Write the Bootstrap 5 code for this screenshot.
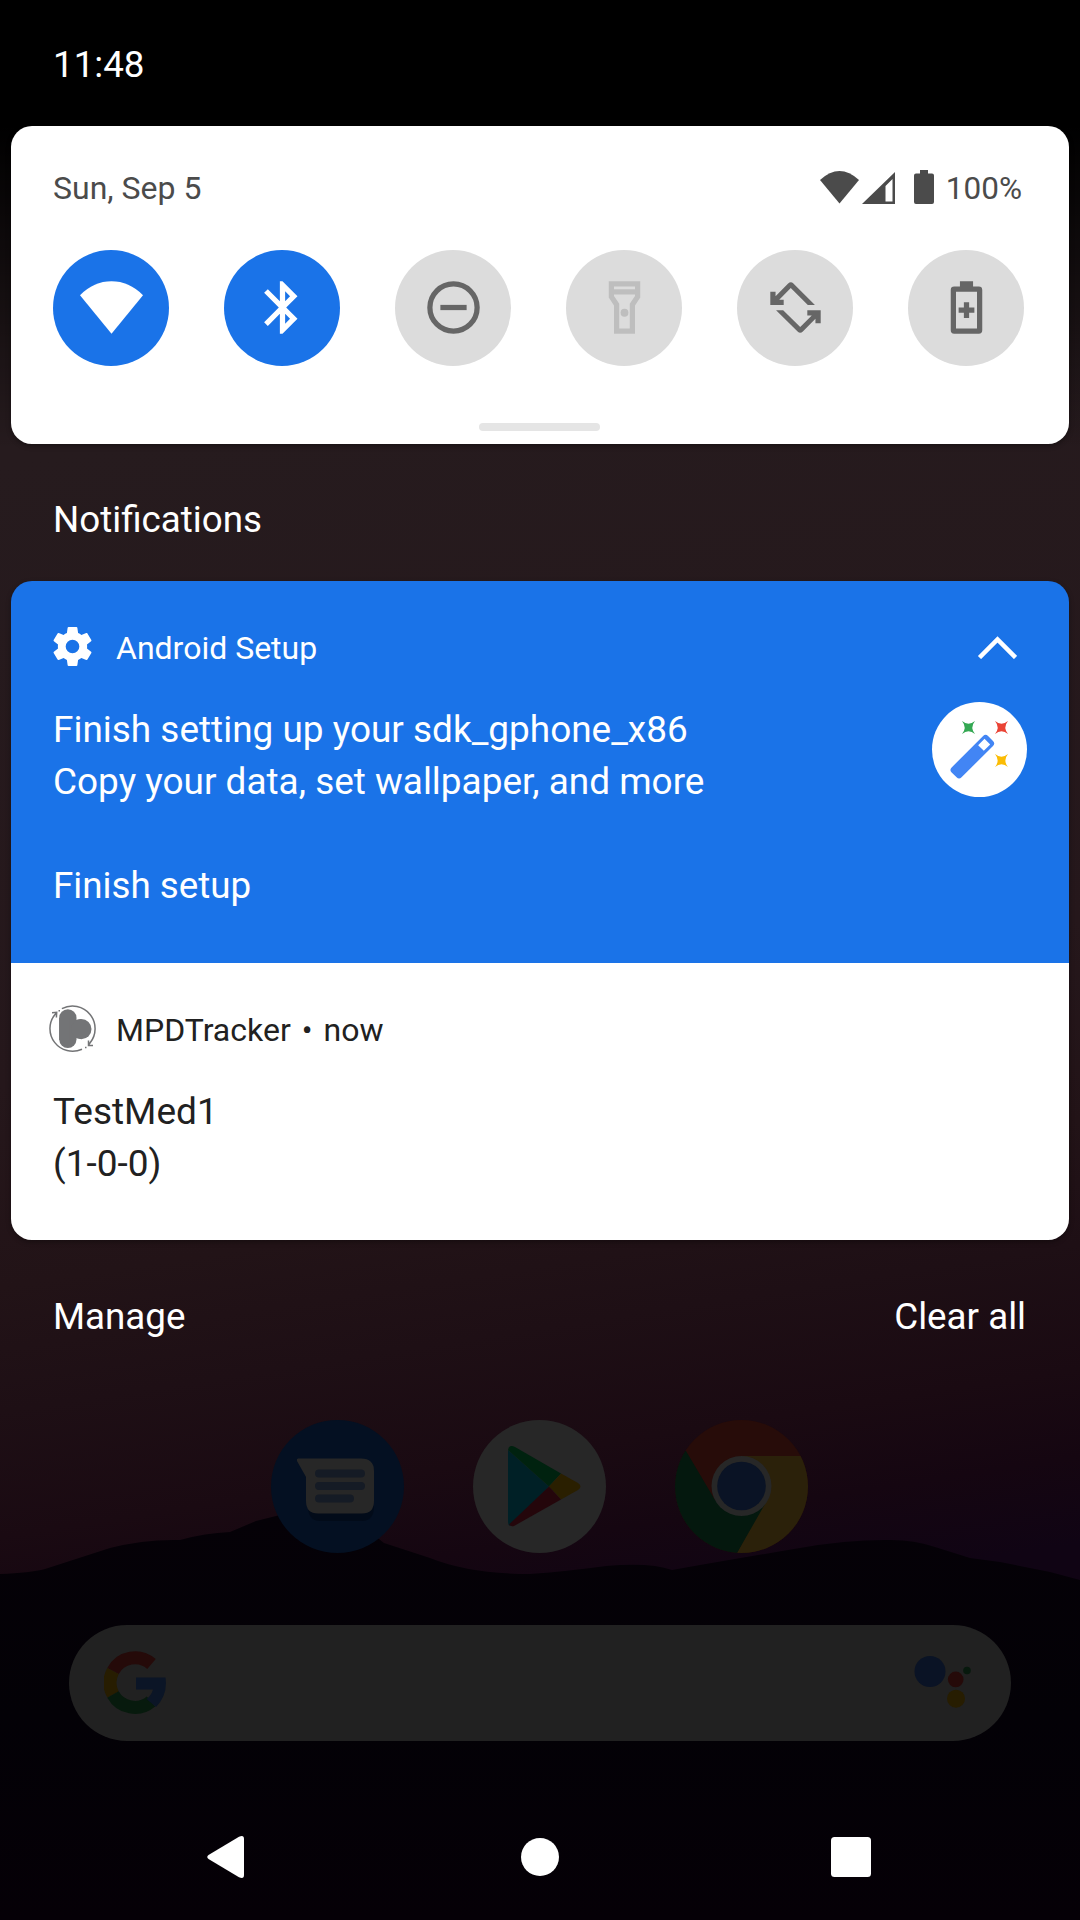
<!DOCTYPE html>
<html lang="en">
<head>
<meta charset="utf-8">
<meta name="viewport" content="width=device-width, initial-scale=1">
<title>Notification shade</title>
<link href="https://cdn.jsdelivr.net/npm/bootstrap@5.3.0/dist/css/bootstrap.min.css" rel="stylesheet">
<style>
body{background:#000;font-family:Roboto,"Noto Sans",sans-serif;font-size:36.750px;line-height:52px;color:#fff}
svg{display:block;flex:none}
.phone{width:1080px;height:1920px}
.wall{z-index:0}
.shade{z-index:1;height:1920px}
.clock-bar{height:126px;padding:39px 53px 0}
.panel{margin:0 11px;border-radius:21px;overflow:hidden;box-shadow:0 2px 5px rgba(0,0,0,.35)}
.quick{height:318px;background:#fff;color:#4b4b4b}
.quick-top{height:124px;padding:0 47px 0 42px;font-size:32px}
.charge{margin-left:11px;padding-top:1px;font-size:31.5px}
.tiles{padding:0 45px 0 42px}
.tile{width:116px;height:116px;border-radius:50%;background:#dcdcdc;color:#666;padding:0 0 1px}
.tile.active{background:#1a73e8;color:#fff}
.tile.off{color:#bebebe}
.handle{width:121px;height:8px;border-radius:4px;background:#e5e5e5;margin:57px 0 0 468px}
.section-title{height:137px;padding:50px 53px 0}
.note{padding-left:42px;padding-right:42px;font-size:37px}
.note-blue{height:382px;background:#1a73e8;padding-top:44px}
.note-white{height:277px;background:#fff;color:#212121;padding-top:42px}
.note-head{font-size:32px;line-height:40px}
.note-main{padding-top:33px}
.note-blue .note-main{padding-top:34px;font-size:36.950px}
.note-text{padding-top:2px}
.app-name{padding-top:2px}
.dot-sep{margin:0 11px;padding-top:2px}
.note-action{padding-top:52px;font-size:36.750px}
.footer-row{height:180px;padding:51px 54px 0 53px}
.dock{gap:69px;height:133px;padding-right:2px}
.search{width:942px;height:116px;border-radius:58px;background:#212121;margin:72px 0 0 69px;padding:0 40px 0 35px}
.navbar-soft{margin-top:95px;height:42px;padding:0 209px 0 207px}
.home-dot{margin-left:5px}
</style>
<script src="https://cdn.jsdelivr.net/npm/bootstrap@5.3.0/dist/js/bootstrap.bundle.min.js"></script>
</head>
<body>
<div class="phone position-relative overflow-hidden">
<svg class="wall position-absolute top-0 start-0" width="1080" height="1920" viewBox="0 0 1080 1920">
<defs>
<linearGradient id="night" x1="0" y1="0" x2="0" y2="1"><stop offset="0" stop-color="#000"/><stop offset=".28" stop-color="#000"/><stop offset="1" stop-color="#000" stop-opacity="0"/></linearGradient>
<linearGradient id="sky" gradientUnits="userSpaceOnUse" x1="400" y1="400" x2="590" y2="1620">
<stop offset="0" stop-color="#261b1e"/><stop offset=".5" stop-color="#25171b"/><stop offset=".66" stop-color="#221317"/><stop offset=".76" stop-color="#1e0f15"/><stop offset=".86" stop-color="#1a0a12"/><stop offset=".93" stop-color="#150611"/><stop offset="1" stop-color="#100414"/>
</linearGradient>
<linearGradient id="hill" x1="0" y1="0" x2="0" y2="1"><stop offset="0" stop-color="#050107"/><stop offset=".5" stop-color="#030106"/><stop offset="1" stop-color="#050006"/></linearGradient>
</defs>
<rect width="1080" height="1920" fill="url(#sky)"/>
<rect width="1080" height="450" fill="url(#night)"/>
<path fill="url(#hill)" d="M0 1574Q30 1573 45 1569L110 1548Q145 1539 180 1540Q205 1533 230 1532L256 1521 280 1515Q340 1505 384 1543L430 1558Q470 1574 530 1574Q570 1571 606 1566Q650 1562 672 1570Q740 1558 800 1548Q845 1540 885 1540Q912 1539 935 1547L970 1558 1000 1562 1050 1572 1080 1580V1920H0z"/>
</svg>

<main class="shade position-relative d-flex flex-column">
<header class="clock-bar">11:48</header>

<section class="panel quick">
<div class="quick-top d-flex justify-content-between align-items-center">
<span>Sun, Sep 5</span>
<div class="d-flex align-items-center">
<svg width="115" height="36" viewBox="0 1 115 36" fill="#4b4b4b"><path d="M0 11Q19.500-7 39 11L19.500 34.500z"/><path fill-rule="evenodd" d="M75 3V35H42zM72.500 10L65.500 17V32.500H72.500z"/><path d="M100 1h8v3.500h4q2 0 2 2V33q0 2-2 2H96q-2 0-2-2V6.500q0-2 2-2h4z"/></svg>
<span class="charge">100%</span>
</div>
</div>
<div class="tiles d-flex justify-content-between">
<div class="tile active d-flex align-items-center justify-content-center"><svg width="63" height="63" viewBox="0 0 24 24" fill="currentColor"><path d="M0 7.300Q5.300 2 12 2T24 7.300L12 22z"/></svg></div>
<div class="tile active d-flex align-items-center justify-content-center"><svg width="63" height="63" viewBox="0 0 24 24" fill="currentColor"><path d="M17.710 7.710L12 2h-1v7.590L6.410 5 5 6.410 10.590 12 5 17.590 6.410 19 11 14.410V22h1l5.710-5.710-4.300-4.290 4.300-4.290zM13 5.830l1.880 1.880L13 9.590V5.830zm1.880 10.460L13 18.170v-3.760l1.880 1.880z"/></svg></div>
<div class="tile d-flex align-items-center justify-content-center"><svg width="63" height="63" viewBox="0 0 24 24" fill="none" stroke="currentColor" stroke-width="2"><circle cx="12" cy="12" r="9"/><path d="M7 12h10"/></svg></div>
<div class="tile off d-flex align-items-center justify-content-center"><svg width="63" height="63" viewBox="0 0 24 24" fill="currentColor"><path fill-rule="evenodd" d="M6 2v6.200l2 3V22h8V11.200l2-3V2zM16 4v1H8V4zM14 10.600V20h-4v-9.400l-2-3V7h8v.600z"/><circle cx="12" cy="14" r="1.500"/></svg></div>
<div class="tile d-flex align-items-center justify-content-center"><svg width="63" height="63" viewBox="0 0 24 24" fill="currentColor"><g id="turn"><path d="M19.400 11h-2.700L10.200 4.600 5.800 9H7.500v2H2.400V6h2v1.700L9.200 2.900q1-1 2 0z"/></g><use href="#turn" transform="rotate(180 12 12)"/></svg></div>
<div class="tile d-flex align-items-center justify-content-center"><svg width="63" height="63" viewBox="0 0 24 24" fill="currentColor"><path fill-rule="evenodd" d="M9.500 2h5v2h2.200Q18 4 18 5.300V20.700Q18 22 16.700 22H7.300Q6 22 6 20.700V5.300Q6 4 7.300 4h2.200zM8 6v14h8V6z"/><path d="M11 10h2v2h2v2h-2v2h-2v-2H9v-2h2z"/></svg></div>
</div>
<div class="handle"></div>
</section>

<div class="section-title">Notifications</div>

<section class="panel">
<article class="note note-blue">
<div class="note-head d-flex align-items-center">
<svg width="39" height="41" viewBox="2 1.500 20 21" fill="#fff"><path d="M19.430 12.980c.04-.32.07-.64.07-.98s-.03-.66-.07-.98l2.110-1.650c.19-.15.24-.42.12-.64l-2-3.460c-.12-.22-.39-.3-.61-.22l-2.490 1c-.52-.4-1.080-.73-1.690-.98l-.38-2.650C14.460 2.180 14.250 2 14 2h-4c-.25 0-.46.18-.49.42l-.38 2.650c-.61.25-1.170.59-1.690.98l-2.490-1c-.23-.09-.49 0-.61.22l-2 3.460c-.13.22-.07.49.12.64l2.110 1.650c-.04.32-.07.65-.07.98s.03.66.07.98l-2.110 1.650c-.19.15-.24.42-.12.64l2 3.460c.12.22.39.3.61.22l2.490-1c.52.4 1.080.73 1.690.98l.38 2.650c.03.24.24.42.49.42h4c.25 0 .46-.18.49-.42l.38-2.650c.61-.25 1.170-.59 1.690-.98l2.490 1c.23.09.49 0 .61-.22l2-3.460c.12-.22.07-.49-.12-.64l-2.110-1.650zM12 15.500a3.500 3.500 0 1 1 0-7 3.500 3.500 0 0 1 0 7z"/></svg>
<span style="margin-left:24px;padding-top:3px">Android Setup</span>
<svg class="ms-auto" style="margin-right:10px" width="40" height="24" viewBox="0 -1 40 24" fill="none" stroke="#fff" stroke-width="4.500"><path d="M2.500 21.500L20.500 3.500L38.500 21.500"/></svg>
</div>
<div class="note-main d-flex justify-content-between">
<div class="note-text">Finish setting up your sdk_gphone_x86<br>Copy your data, set wallpaper, and more</div>
<svg width="95" height="95" viewBox="0 0 95 95"><circle cx="47.500" cy="47.500" r="47.500" fill="#fff"/><g transform="rotate(45 40.500 54.500)"><path fill="#4285f4" fill-rule="evenodd" d="M37 29h7q3.500 0 3.500 3.500V77q0 3.500-3.500 3.500h-7q-3.500 0-3.500-3.500V32.500q0-3.500 3.500-3.500zM36.500 33.500v9h8v-9z"/></g><path fill="#34a853" d="M30 19Q36.500 24.300 43 19Q37.700 25.500 43 32Q36.500 26.700 30 32Q35.300 25.500 30 19z"/><path fill="#ea4335" d="M63 19Q69.500 24.300 76 19Q70.700 25.500 76 32Q69.500 26.700 63 32Q68.300 25.500 63 19z"/><path fill="#fbbc04" d="M63 52Q69.500 57.300 76 52Q70.700 58.500 76 65Q69.500 59.700 63 65Q68.300 58.500 63 52z"/></svg>
</div>
<div class="note-action">Finish setup</div>
</article>
<article class="note note-white">
<div class="note-head d-flex align-items-center">
<svg style="margin-left:-4px" width="47" height="48" viewBox="0 0 47 48"><g fill="#737476"><rect x="10.200" y="4.300" width="17.300" height="38.600" rx="8.600"/><rect x="10.200" y="13" width="10" height="22"/><circle cx="32.300" cy="24.100" r="10.200"/><path d="M27 15l5-1v20l-5-1z"/></g><g fill="none" stroke="#737476" stroke-width="1.500"><path d="M12.900 3.700A22.600 22.600 0 0 1 40.800 38.200L39.500 40M33 44.200A22.600 22.600 0 0 1 6.200 9.200L7.700 7.500M3 7.800L7.700 7.300 7.400 12.500M39.500 35.500V40.500H44M36 42.500h1.500M9.500 5.800H11"/></g></svg>
<span class="app-name" style="margin-left:20px">MPDTracker</span><span class="dot-sep">•</span><span class="app-name">now</span>
</div>
<div class="note-main">TestMed1<br>(1-0-0)</div>
</article>
</section>

<div class="footer-row d-flex justify-content-between"><span>Manage</span><span>Clear all</span></div>

<div class="dock d-flex justify-content-center">
<svg width="133" height="133" viewBox="0 0 133 133"><circle cx="66.500" cy="66.500" r="66.500" fill="#041022"/><path fill="#020914" opacity=".6" d="M29 43L37 62V86Q37 101 49 101H91Q103 101 103 86V54z"/><path fill="#272727" d="M27 38.500H90Q103 38.500 103 51V81Q103 93.500 91 93.500H47Q35 93.500 35 81V57L26 41Q25.500 38.500 27 38.500z"/><path stroke="#151b25" stroke-width="8" stroke-linecap="round" d="M48 53.500H90M48 66H90M48 78.500H79"/></svg>
<svg width="133" height="133" viewBox="0 0 133 133"><circle cx="66.500" cy="66.500" r="66.500" fill="#272727"/><path fill="#002026" d="M35 30L76 66.500 37 106Q35 105 35 102z"/><path fill="#00220f" d="M35 30Q36 24 42 27L88 53.500 76 66.500z"/><path fill="#2a1f00" d="M88 53.500L105 63Q110 66.500 105 70L88 79.500 76 66.500z"/><path fill="#24060b" d="M76 66.500L88 79.500 41 106Q38 107 36 104.500z"/></svg>
<svg width="133" height="133" viewBox="0 0 133 133"><defs><clipPath id="disc"><circle cx="66.500" cy="66.500" r="66.500"/></clipPath></defs><g clip-path="url(#disc)"><rect width="133" height="133" fill="#270c09"/><path fill="#2b210a" d="M66 36H133V133H62L90 80z"/><path fill="#04180e" d="M0 31H11L40 80 90 84 62 133H0z"/></g><circle cx="66.500" cy="66" r="30" fill="#272727"/><circle cx="66.500" cy="66" r="24.300" fill="#0a1325"/></svg>
</div>

<div class="search d-flex justify-content-between align-items-center">
<svg width="62" height="64" viewBox="0 0 62 64" fill="none"><g stroke-width="13"><path stroke="#250a09" d="M47.500 13A25 25 0 0 0 9 20"/><path stroke="#271d01" d="M9 20A25 25 0 0 0 9 43.500"/><path stroke="#071a0d" d="M9 43.500A25 25 0 0 0 47 50.500"/></g><path fill="#0b1526" d="M32 26.500H61.500Q64 44 52 56L42.500 48Q47 45 49 38.500H32z"/></svg>
<svg width="57" height="64" viewBox="0 0 57 64"><circle cx="16" cy="20.500" r="15.500" fill="#0a1325"/><circle cx="41.700" cy="28.400" r="7.800" fill="#250a09"/><circle cx="53" cy="19.500" r="3.800" fill="#07190d"/><circle cx="42" cy="47.700" r="9" fill="#271d01"/></svg>
</div>

<nav class="navbar-soft d-flex justify-content-between align-items-center">
<svg width="37" height="42" viewBox="0 0 37 42"><path fill="#fff" d="M1.500 19L32 .8Q37-1.500 37 3V39Q37 43.500 32 41.200L1.500 23Q-1 21 1.500 19z"/></svg>
<svg class="home-dot" width="38" height="38" viewBox="0 0 38 38"><circle cx="19" cy="19" r="19" fill="#fff"/></svg>
<svg width="40" height="40" viewBox="0 0 40 40"><rect width="40" height="40" rx="3.500" fill="#fff"/></svg>
</nav>
</main>
</div>
</body>
</html>
